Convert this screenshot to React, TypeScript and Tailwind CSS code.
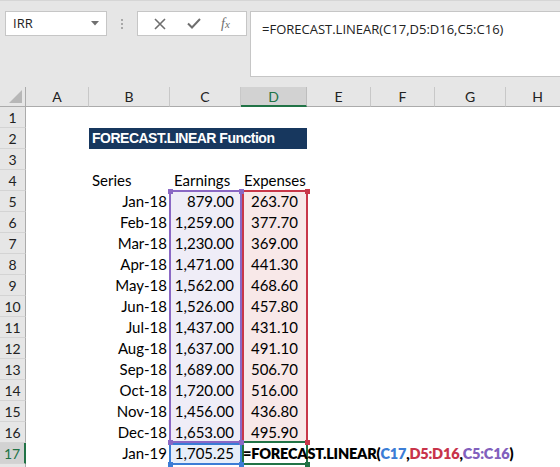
import React from "react";

const rows = [
  ["Jan-18", "879.00", "263.70"],
  ["Feb-18", "1,259.00", "377.70"],
  ["Mar-18", "1,230.00", "369.00"],
  ["Apr-18", "1,471.00", "441.30"],
  ["May-18", "1,562.00", "468.60"],
  ["Jun-18", "1,526.00", "457.80"],
  ["Jul-18", "1,437.00", "431.10"],
  ["Aug-18", "1,637.00", "491.10"],
  ["Sep-18", "1,689.00", "506.70"],
  ["Oct-18", "1,720.00", "516.00"],
  ["Nov-18", "1,456.00", "436.80"],
  ["Dec-18", "1,653.00", "495.90"],
];

const colLetters = ["A", "B", "C", "D", "E", "F", "G", "H"];

function RowHead({ n, active }: { n?: number; active?: boolean }) {
  return (
    <div
      className={
        "h-[21px] flex items-center justify-center border-b border-[#d4d4d4] text-[14px] " +
        (active
          ? "bg-[#d2d2d2] border-r-2 border-r-[#217346] text-[#217346]"
          : "bg-[#e6e6e6] border-r border-r-[#ababab] text-[#222]")
      }
    >
      {n}
    </div>
  );
}

function Blank({ n }: { n: number }) {
  return (
    <>
      {Array.from({ length: n }).map((_, i) => (
        <div key={i} className="h-[21px] bg-white" />
      ))}
    </>
  );
}

function Handle({ x, y, color }: { x: number; y: number; color: string }) {
  return (
    <div
      className={"absolute w-[5px] h-[5px] " + color}
      style={{ left: x - 2.5, top: y - 2.5 }}
    />
  );
}

export default function App() {
  return (
    <div
      className="w-[560px] h-[467px] overflow-hidden bg-white text-black"
      style={{ fontFamily: "Lato, 'Noto Sans', sans-serif" }}
    >
      {/* toolbar */}
      <div className="h-[87px] bg-[#e6e6e6] border-t border-[#d6d6d6] flex items-start pt-[10px] pl-[5px]">
        <div className="w-[102px] h-[25px] bg-white border border-[#c6c6c6] flex items-center justify-between pl-[7px] pr-[7px]">
          <span
            className="text-[13px] text-[#222]"
            style={{ fontFamily: "'Open Sans', 'Noto Sans', sans-serif" }}
          >
            IRR
          </span>
          <svg width="8" height="5" viewBox="0 0 8 5">
            <path d="M0 0 H8 L4 4.5 Z" fill="#707070" />
          </svg>
        </div>
        <div className="w-[30px] h-[25px] flex flex-col items-center justify-center gap-[2px]">
          <div className="w-[2px] h-[2px] bg-[#a8a8a8]" />
          <div className="w-[2px] h-[2px] bg-[#a8a8a8]" />
          <div className="w-[2px] h-[2px] bg-[#a8a8a8]" />
        </div>
        <div className="w-[110px] h-[25px] bg-white border border-[#c6c6c6] flex items-center justify-around px-[6px]">
          <svg width="12" height="12" viewBox="0 0 12 12">
            <path d="M1 1 L11 11 M11 1 L1 11" stroke="#6e6e6e" strokeWidth="1.6" />
          </svg>
          <svg width="14" height="11" viewBox="0 0 14 11">
            <path d="M1 5.5 L5 9.5 L13 1" stroke="#6e6e6e" strokeWidth="2" fill="none" />
          </svg>
          <span
            className="text-[14px] italic text-[#6e6e6e] leading-none"
            style={{ fontFamily: "'Liberation Serif', serif" }}
          >
            f<span className="text-[11px]">x</span>
          </span>
        </div>
        <div className="ml-[3px] flex-1 h-[66px] bg-white border border-[#c6c6c6] border-r-0 pl-[11px] pt-[4px]">
          <span
            className="text-[13px] text-[#222]"
            style={{ fontFamily: "'Open Sans', 'Noto Sans', sans-serif" }}
          >
            =FORECAST.LINEAR(C17,D5:D16,C5:C16)
          </span>
        </div>
      </div>

      {/* sheet */}
      <div className="relative">
        <div className="grid grid-cols-[26px_63px_81px_71px_66px_64px_64px_71px_64px] text-[15px]">
          {/* column headers */}
          <div className="h-[20px] bg-[#e6e6e6] border-b border-r border-[#ababab] relative">
            <svg className="absolute right-[3px] bottom-[3px]" width="13" height="13" viewBox="0 0 13 13">
              <path d="M13 0 V13 H0 Z" fill="#b7b7b7" />
            </svg>
          </div>
          {colLetters.map((c) =>
            c === "D" ? (
              <div
                key={c}
                className="h-[20px] bg-[#d2d2d2] border-b-2 border-[#217346] border-r border-r-[#bdbdbd] flex items-center justify-center text-[14px] text-[#217346]"
              >
                {c}
              </div>
            ) : (
              <div
                key={c}
                className="h-[20px] bg-[#e6e6e6] border-b border-[#ababab] border-r border-r-[#c8c8c8] flex items-center justify-center text-[14px] text-[#222]"
              >
                {c}
              </div>
            )
          )}

          {/* row 1 */}
          <RowHead n={1} />
          <Blank n={8} />

          {/* row 2 */}
          <RowHead n={2} />
          <div className="h-[21px] bg-white" />
          <div
            className="col-span-3 h-[21px] bg-[#17375e] text-white font-bold text-[14px] tracking-[-0.5px] flex items-center pl-[3px]"
            style={{ fontFamily: "'Liberation Sans', Arial, sans-serif" }}
          >
            FORECAST.LINEAR Function
          </div>
          <Blank n={4} />

          {/* row 3 */}
          <RowHead n={3} />
          <Blank n={8} />

          {/* row 4 */}
          <RowHead n={4} />
          <div className="h-[21px] bg-white" />
          <div className="h-[21px] flex items-center pl-[3px]">Series</div>
          <div className="h-[21px] flex items-center pl-[4px]">Earnings</div>
          <div className="h-[21px] flex items-center pl-[3px]">Expenses</div>
          <Blank n={4} />

          {rows.map((r, i) => (
            <React.Fragment key={r[0]}>
              <RowHead n={i + 5} />
              <div className="h-[21px] bg-white" />
              <div className="h-[21px] flex items-center justify-end pr-[3px]">{r[0]}</div>
              <div className="h-[21px] flex items-center justify-end pr-[7px] bg-[#efedf7]">{r[1]}</div>
              <div className="h-[21px] flex items-center justify-end pr-[9px] bg-[#f8e8e8]">{r[2]}</div>
              <Blank n={4} />
            </React.Fragment>
          ))}

          {/* row 17 */}
          <RowHead n={17} active />
          <div className="h-[21px] bg-white" />
          <div className="h-[21px] flex items-center justify-end pr-[3px]">Jan-19</div>
          <div className="h-[21px] flex items-center justify-end pr-[7px] bg-[#e6eef9]">1,705.25</div>
          <div className="h-[21px] flex items-center pl-[2px] relative z-10 whitespace-nowrap font-extrabold text-[14.5px] tracking-[-0.2px]">
            <span>=FORECAST.LINEAR(</span>
            <span className="text-[#3b7dd6]">C17</span>
            <span>,</span>
            <span className="text-[#c8334a]">D5:D16</span>
            <span>,</span>
            <span className="text-[#8160bd]">C5:C16</span>
            <span>)</span>
            <span className="ml-[2px] w-[1px] h-[17px] bg-black" />
          </div>
          <Blank n={4} />

          {/* row 18 (partly visible) */}
          <RowHead />
          <Blank n={8} />
        </div>

        {/* range highlight overlays */}
        <div className="absolute left-[169px] top-[103px] w-[73px] h-[253px] border-2 border-[#8a68c4] pointer-events-none" />
        <div className="absolute left-[242px] top-[103px] w-[66px] h-[253px] border-2 border-[#c8374a] pointer-events-none" />
        <div className="absolute left-[169px] top-[356px] w-[73px] h-[22px] border-2 border-[#3b7dd6] pointer-events-none" />
        <div className="absolute left-[242px] top-[354px] w-[66px] h-[24px] border-2 border-[#217346] pointer-events-none" />

        <Handle x={170} y={104} color="bg-[#8a68c4]" />
        <Handle x={241} y={104} color="bg-[#8a68c4]" />
        <Handle x={170} y={355} color="bg-[#8a68c4]" />
        <Handle x={241} y={355} color="bg-[#8a68c4]" />
        <Handle x={307} y={104} color="bg-[#c8374a]" />
        <Handle x={307} y={355} color="bg-[#c8374a]" />
        <Handle x={170} y={377} color="bg-[#3b7dd6]" />
        <Handle x={241} y={377} color="bg-[#3b7dd6]" />
        <Handle x={307} y={377} color="bg-[#217346]" />
      </div>
    </div>
  );
}
